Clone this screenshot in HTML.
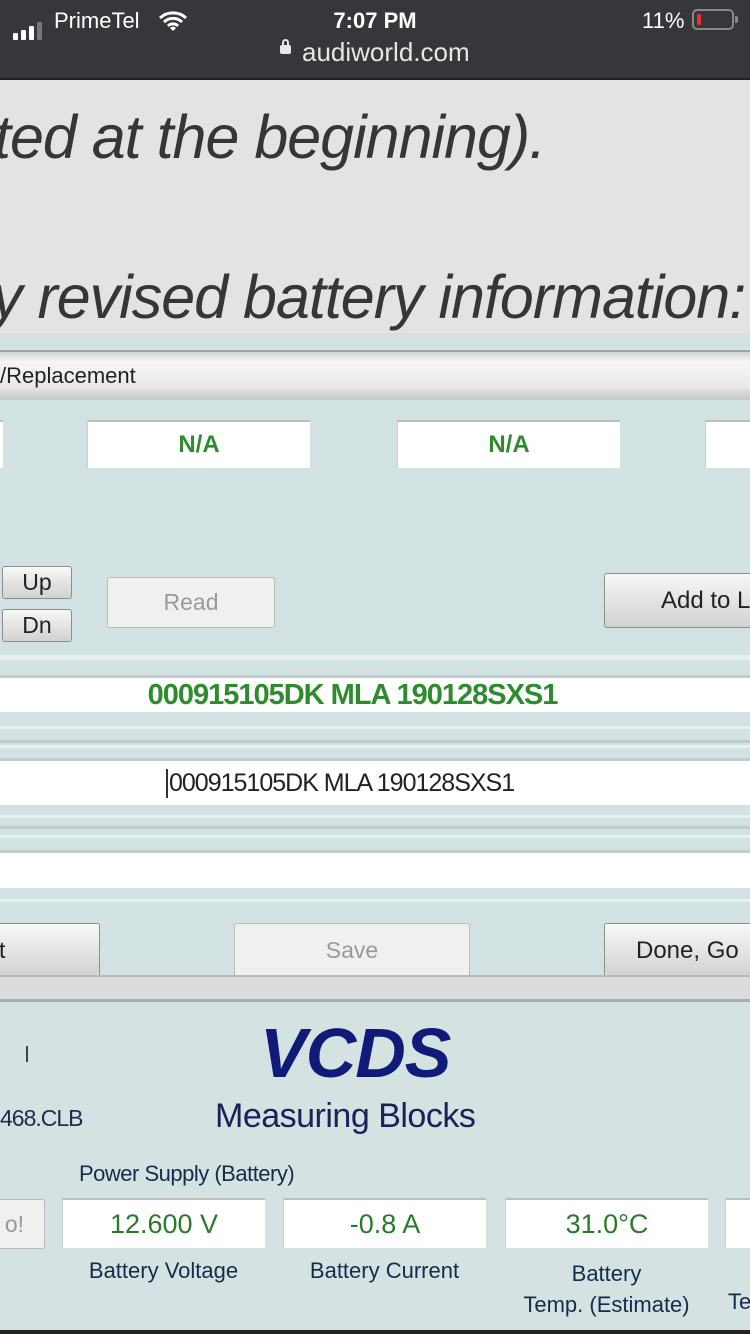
<!DOCTYPE html>
<html><head><meta charset="utf-8"><style>
*{margin:0;padding:0;box-sizing:border-box}
body{width:750px;height:1334px;overflow:hidden;background:#e3e3e3;font-family:"Liberation Sans",sans-serif;position:relative}
.a{position:absolute}
.sb{left:0;top:0;width:750px;height:80px;background:#36373b;border-bottom:2px solid #1e1f22;color:#fff}
.it{font-style:italic;color:#363636;font-size:61px;white-space:nowrap;letter-spacing:-1px}
.shot{left:0;top:333px;width:750px;height:1001px;background:#d2e1e1}
.box{background:#fff;border-top:2px solid #b8c0c0;border-left:1px solid #c8d0d0;display:flex;align-items:center;justify-content:center}
.g{color:#2e8b2e;font-weight:bold}
.btn{border:1px solid #8a8f92;border-radius:3px;background:linear-gradient(#f8f8f8,#e2e2e2 55%,#d2d2d2);display:flex;align-items:center;justify-content:center;color:#222;font-size:23px}
.dis{border:1px solid #b8bcbe;background:#f0f0f0;color:#999}
.line{left:0;width:750px;height:3px;background:#bfcccc}
.lt{left:0;width:750px;height:3px;background:#e6eeee}
.lab{color:#1a2a4a;font-size:22px;text-align:center}
</style></head><body>
<div class="a sb">
 <div class="a" style="left:13px;top:22px;display:flex;align-items:flex-end;gap:3px">
  <div style="width:5px;height:7px;background:#fff;border-radius:1px"></div>
  <div style="width:5px;height:10px;background:#fff;border-radius:1px"></div>
  <div style="width:5px;height:14px;background:#fff;border-radius:1px"></div>
  <div style="width:5px;height:18px;background:#777;border-radius:1px"></div>
 </div>
 <div class="a" style="left:54px;top:8px;font-size:22px">PrimeTel</div>
 <svg class="a" style="left:158px;top:10px" width="30" height="22" viewBox="0 0 30 22"><path d="M2 8a19 19 0 0 1 26 0M6 12a13 13 0 0 1 18 0M10 16a7 7 0 0 1 10 0" stroke="#fff" stroke-width="3" fill="none"/><path d="M12 18l3 3 3-3a4 4 0 0 0-6 0z" fill="#fff"/></svg>
 <div class="a" style="left:0;width:750px;top:8px;text-align:center;font-size:22px;font-weight:bold">7:07 PM</div>
 <div class="a" style="left:642px;top:8px;font-size:22px">11%</div>
 <div class="a" style="left:692px;top:9px;width:42px;height:21px;border:2px solid #888;border-radius:5px"><div style="margin:3px;width:4px;height:11px;background:#e8322e;border-radius:1px"></div></div>
 <div class="a" style="left:735px;top:16px;width:3px;height:7px;background:#888;border-radius:0 2px 2px 0"></div>
 <div class="a" style="left:280px;top:45px;width:11px;height:9px;background:#e8e8e8;border-radius:2px"></div>
 <div class="a" style="left:282px;top:39px;width:7px;height:9px;border:2px solid #e8e8e8;border-radius:4px 4px 0 0"></div>
 <div class="a" style="left:302px;top:37px;font-size:26px;color:#e6e6e6">audiworld.com</div>
</div>
<div class="a it" style="left:-6px;top:102px">ted at the beginning).</div>
<div class="a it" style="left:-8px;top:262px">y revised battery information:</div>
<div class="a shot">
 <div class="a" style="left:0;top:17px;width:750px;height:50px;background:linear-gradient(#cfd4d4,#f6f6f6 20%,#eaeaea 70%,#c4c8c8);border-top:2px solid #9ea4a4"></div>
 <div class="a" style="left:0;top:30px;font-size:22px;color:#222">/Replacement</div>
 <div class="a box" style="left:-10px;top:87px;width:13px;height:48px"></div>
 <div class="a box g" style="left:87px;top:87px;width:223px;height:48px;font-size:24px">N/A</div>
 <div class="a box g" style="left:397px;top:87px;width:223px;height:48px;font-size:24px">N/A</div>
 <div class="a box" style="left:705px;top:87px;width:60px;height:48px"></div>
 <div class="a btn" style="left:2px;top:233px;width:70px;height:33px">Up</div>
 <div class="a btn" style="left:2px;top:276px;width:70px;height:33px">Dn</div>
 <div class="a btn dis" style="left:107px;top:244px;width:168px;height:51px">Read</div>
 <div class="a btn" style="left:604px;top:240px;width:160px;height:55px;justify-content:flex-start;padding-left:56px;font-size:24px">Add to L</div>
 <div class="a lt" style="top:322px;height:5px"></div>
 <div class="a line" style="top:342px"></div>
 <div class="a box g" style="left:0;top:345px;width:750px;height:34px;font-size:29px;border:none;padding-right:45px;letter-spacing:-1px">000915105DK MLA 190128SXS1</div>
 <div class="a lt" style="top:393px"></div>
 <div class="a line" style="top:407px"></div>
 <div class="a lt" style="top:412px"></div>
 <div class="a line" style="top:425px"></div>
 <div class="a box" style="left:0;top:428px;width:750px;height:44px;border:none;justify-content:flex-start;padding-left:166px;font-size:25px;color:#222;letter-spacing:-1px"><span style="border-left:2px solid #333;padding-left:1px">000915105DK MLA 190128SXS1</span></div>
 <div class="a lt" style="top:482px"></div>
 <div class="a line" style="top:493px"></div>
 <div class="a lt" style="top:502px"></div>
 <div class="a line" style="top:517px"></div>
 <div class="a box" style="left:0;top:520px;width:750px;height:35px;border:none"></div>
 <div class="a lt" style="top:566px"></div>
 <div class="a btn" style="left:-10px;top:590px;width:110px;height:55px;justify-content:flex-start;padding-left:8px">t</div>
 <div class="a btn dis" style="left:234px;top:590px;width:236px;height:55px">Save</div>
 <div class="a btn" style="left:604px;top:590px;width:160px;height:55px;justify-content:flex-start;padding-left:31px;font-size:24px">Done, Go</div>
 <div class="a" style="left:0;top:642px;width:750px;height:25px;background:#dcdcdc;border-top:2px solid #b8bcbe"></div>
 <div class="a" style="left:0;top:666px;width:750px;height:3px;background:#9fb0c0"></div>
 <div class="a" style="left:0;top:670px;width:750px;height:331px;background:#d4e2e2"></div>
 <div class="a" style="left:26px;top:713px;width:2px;height:16px;background:#444"></div>
 <div class="a" style="left:260px;top:680px;font-size:70px;font-weight:bold;font-style:italic;color:#101a78;letter-spacing:-1px">VCDS</div>
 <div class="a" style="left:215px;top:764px;font-size:34px;color:#1a2258;letter-spacing:-0.5px">Measuring Blocks</div>
 <div class="a" style="left:0;top:772px;font-size:23px;color:#222a50;letter-spacing:-1px">468.CLB</div>
 <div class="a" style="left:79px;top:828px;font-size:22px;color:#1a2a4a;letter-spacing:-0.5px">Power Supply (Battery)</div>
 <div class="a btn dis" style="left:-10px;top:866px;width:55px;height:50px;justify-content:flex-end;padding-right:20px">o!</div>
 <div class="a box g" style="left:62px;top:865px;width:203px;height:50px;font-size:27px;font-weight:normal;color:#2b7a2b">12.600 V</div>
 <div class="a box g" style="left:283px;top:865px;width:203px;height:50px;font-size:27px;font-weight:normal;color:#2b7a2b">-0.8 A</div>
 <div class="a box g" style="left:505px;top:865px;width:203px;height:50px;font-size:27px;font-weight:normal;color:#2b7a2b">31.0°C</div>
 <div class="a box" style="left:725px;top:865px;width:40px;height:50px"></div>
 <div class="a lab" style="left:62px;top:925px;width:203px">Battery Voltage</div>
 <div class="a lab" style="left:283px;top:925px;width:203px">Battery Current</div>
 <div class="a lab" style="left:505px;top:925px;width:203px;line-height:31px">Battery<br>Temp. (Estimate)</div>
 <div class="a lab" style="left:728px;top:956px">Te</div>
 <div class="a" style="left:0;top:997px;width:750px;height:4px;background:#222"></div>
</div>
</body></html>
